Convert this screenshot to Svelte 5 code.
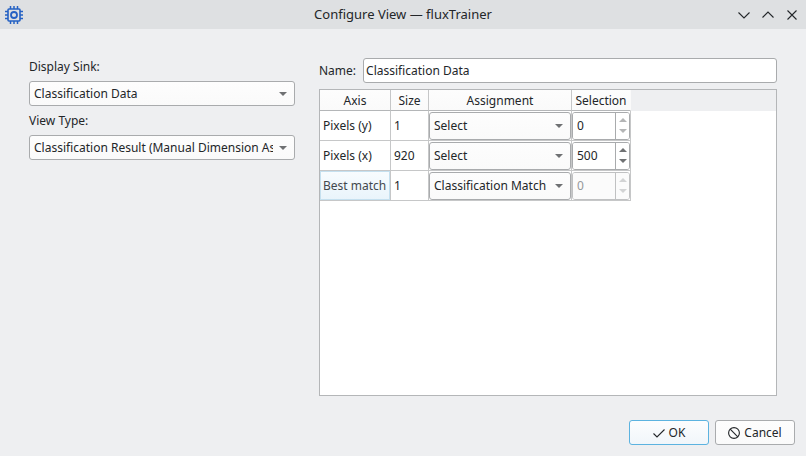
<script lang="ts">
    interface Row {
        axis: string;
        size: number;
        assignment: string;
        selection: number;
        max: number;
        disabled: boolean;
    }

    const sinks = ["Classification Data"];
    const viewTypes = ["Classification Result (Manual Dimension Assignment)"];
    const assignments = ["Select", "Classification Match"];

    let sink = $state(sinks[0]);
    let viewType = $state(viewTypes[0]);
    let name = $state("Classification Data");
    let current = $state(2);
    let rows: Row[] = $state([
        { axis: "Pixels (y)", size: 1, assignment: "Select", selection: 0, max: 0, disabled: false },
        { axis: "Pixels (x)", size: 920, assignment: "Select", selection: 500, max: 919, disabled: false },
        { axis: "Best match", size: 1, assignment: "Classification Match", selection: 0, max: 0, disabled: true },
    ]);

    const step = (row: Row, delta: number) => {
        row.selection = Math.min(Math.max(row.selection + delta, 0), row.max);
    };
</script>

{#snippet combo(id: string, label: string | undefined, options: string[], value: string, onpick: (v: string) => void)}
    <div class="combo">
        <select {id} aria-label={label} {value} onchange={(e) => onpick(e.currentTarget.value)}>
            {#each options as option}
                <option>{option}</option>
            {/each}
        </select>
        <svg class="arrow" viewBox="0 0 8 4" aria-hidden="true"><path d="M0 0h8L4 4z" /></svg>
    </div>
{/snippet}

<div class="window">
    <header class="titlebar">
        <svg class="app-icon" viewBox="0 0 20 20" aria-hidden="true">
            <path d="M6.5 1v3M10 1v3M13.5 1v3M6.5 16v3M10 16v3M13.5 16v3M1 6.5h3M1 10h3M1 13.5h3M16 6.5h3M16 10h3M16 13.5h3" stroke-width="1.5" />
            <rect x="4" y="4" width="12" height="12" rx="1" stroke-width="1.6" />
            <circle cx="10" cy="10" r="3" stroke-width="1.8" />
        </svg>
        <h1>Configure View — fluxTrainer</h1>
        <div class="window-buttons">
            <button type="button" aria-label="Minimize">
                <svg viewBox="0 0 12 12"><path d="M.5 3.5 6 9l5.5-5.5" /></svg>
            </button>
            <button type="button" aria-label="Maximize">
                <svg viewBox="0 0 12 12"><path d="M.5 8.5 6 3l5.5 5.5" /></svg>
            </button>
            <button type="button" aria-label="Close">
                <svg viewBox="0 0 12 12"><path d="m1.5 1.5 9 9M10.5 1.5l-9 9" /></svg>
            </button>
        </div>
    </header>

    <main class="content">
        <section class="source">
            <label for="sink">Display Sink:</label>
            {@render combo("sink", undefined, sinks, sink, (v) => (sink = v))}
            <label for="view-type">View Type:</label>
            {@render combo("view-type", undefined, viewTypes, viewType, (v) => (viewType = v))}
        </section>

        <section class="view">
            <div class="name-row">
                <label for="name">Name:</label>
                <input id="name" type="text" bind:value={name} />
            </div>

            <div class="table-frame">
                <div class="header-fill"></div>
                <table>
                    <colgroup>
                        <col class="col-axis" />
                        <col class="col-size" />
                        <col class="col-assignment" />
                        <col class="col-selection" />
                    </colgroup>
                    <thead>
                        <tr>
                            <th>Axis</th>
                            <th>Size</th>
                            <th>Assignment</th>
                            <th>Selection</th>
                        </tr>
                    </thead>
                    <tbody>
                        {#each rows as row, i}
                            <tr onclick={() => (current = i)}>
                                <td class="text" class:current={current === i}>{row.axis}</td>
                                <td class="text">{row.size}</td>
                                <td>
                                    {@render combo(`assignment-${i}`, `Assignment of ${row.axis}`, assignments, row.assignment, (v) => (row.assignment = v))}
                                </td>
                                <td>
                                    <div class="spin" class:disabled={row.disabled}>
                                        <input
                                            type="number"
                                            aria-label={`Selection of ${row.axis}`}
                                            min="0"
                                            max={row.max}
                                            disabled={row.disabled}
                                            bind:value={row.selection}
                                        />
                                        <div class="steps">
                                            <button
                                                type="button"
                                                aria-label="Increase"
                                                disabled={row.disabled || row.max === 0}
                                                onclick={() => step(row, 1)}
                                            >
                                                <svg viewBox="0 0 8 4"><path d="M0 4h8L4 0z" /></svg>
                                            </button>
                                            <button
                                                type="button"
                                                aria-label="Decrease"
                                                disabled={row.disabled || row.selection <= 0}
                                                onclick={() => step(row, -1)}
                                            >
                                                <svg viewBox="0 0 8 4"><path d="M0 0h8L4 4z" /></svg>
                                            </button>
                                        </div>
                                    </div>
                                </td>
                            </tr>
                        {/each}
                    </tbody>
                </table>
            </div>
        </section>
    </main>

    <footer class="actions">
        <button type="button" class="push default">
            <svg viewBox="0 0 12 12" aria-hidden="true"><path d="M.5 6.5 4 10l7.500-7.500" /></svg>
            OK
        </button>
        <button type="button" class="push">
            <svg viewBox="0 0 12 12" aria-hidden="true">
                <circle cx="6" cy="6" r="5.4" />
                <path d="m2.2 2.2 7.600 7.600" />
            </svg>
            Cancel
        </button>
    </footer>
</div>

<style>
    :global(body) {
        background: #eeeff1;
    }

    .window {
        display: flex;
        flex-direction: column;
        box-sizing: border-box;
        min-height: 100vh;
        background: #eeeff1;
        color: #232629;
        font-family: "Noto Sans", sans-serif;
        font-size: 12px;
        line-height: 17px;
    }

    .window :is(input, select, button) {
        box-sizing: border-box;
        margin: 0;
        color: inherit;
        font: inherit;
    }

    .titlebar {
        display: grid;
        grid-template-columns: 1fr auto 1fr;
        align-items: center;
        height: 29px;
        padding: 0 4px;
        background: #dee0e2;
    }

    .titlebar h1 {
        margin: 0;
        font-size: 13px;
        font-weight: 400;
    }

    .app-icon {
        width: 20px;
        height: 20px;
        fill: none;
        stroke: #2561c4;
    }

    .window-buttons {
        display: flex;
        justify-content: flex-end;
        gap: 12px;
        padding-right: 4px;
    }

    .window-buttons button {
        display: flex;
        padding: 0;
        border: 0;
        background: none;
    }

    .window-buttons svg {
        width: 12px;
        height: 12px;
        fill: none;
        stroke: #232629;
        stroke-width: 1.1;
    }

    .content {
        display: grid;
        flex: 1;
        grid-template-columns: 266px minmax(0, 1fr);
        gap: 24px;
        padding: 29px 29px 24px;
    }

    .source,
    .view {
        display: flex;
        flex-direction: column;
        gap: 6px;
    }

    .combo {
        display: grid;
        align-items: center;
        min-width: 0;
    }

    .combo select {
        grid-area: 1 / 1;
        width: 100%;
        height: 25px;
        padding: 0 21px 0 4px;
        border: 1px solid #a9abad;
        border-radius: 3px;
        background: linear-gradient(#fdfdfd, #fafafa);
        appearance: none;
    }

    .arrow {
        grid-area: 1 / 1;
        justify-self: end;
        width: 8px;
        height: 4px;
        margin-right: 8px;
        fill: #6f7173;
        pointer-events: none;
    }

    .name-row {
        display: flex;
        align-items: center;
        gap: 7px;
    }

    .name-row input {
        flex: 1;
        min-width: 0;
        height: 25px;
        padding: 0 2px;
        border: 1px solid #a9abad;
        border-radius: 3px;
        background: #fff;
    }

    .table-frame {
        display: grid;
        flex: 1;
        align-items: start;
        border: 1px solid #b4b6b8;
        background: #fff;
    }

    .header-fill {
        grid-area: 1 / 1;
        height: 21px;
        background: #eeeff1;
    }

    table {
        grid-area: 1 / 1;
        width: 311px;
        border-spacing: 0;
        table-layout: fixed;
    }

    .col-axis {
        width: 71px;
    }

    .col-size {
        width: 38px;
    }

    .col-assignment {
        width: 143px;
    }

    .col-selection {
        width: 59px;
    }

    th,
    td {
        box-sizing: border-box;
        padding: 0;
        border-right: 1px solid #c6c7c8;
        border-bottom: 1px solid #c6c7c8;
    }

    th {
        height: 21px;
        border-bottom-color: #b4b6b8;
        background: linear-gradient(#fdfdfd, #fafafa);
        font-weight: 400;
        text-align: center;
    }

    th:last-child {
        border-right-color: #fafafa;
    }

    td {
        height: 30px;
        background: #fff;
    }

    td.text {
        padding: 0 3px;
        white-space: nowrap;
    }

    td.current {
        background: linear-gradient(#f8fcfe, #e9f4fb);
        box-shadow: inset 0 0 0 1px #c5e0ef;
        color: #43484d;
    }

    td .combo select {
        height: 28px;
    }

    .spin {
        display: flex;
        box-sizing: border-box;
        height: 28px;
        border: 1px solid #a9abad;
        border-radius: 3px;
        overflow: hidden;
    }

    .spin input {
        flex: 1;
        min-width: 0;
        padding: 0 4px;
        border: 0;
        background: #fff;
        appearance: textfield;
    }

    .spin input::-webkit-inner-spin-button {
        appearance: none;
    }

    .steps {
        display: flex;
        flex-direction: column;
        width: 13px;
        padding: 2px 0;
        border-left: 1px solid #a9abad;
        background: #fff;
    }

    .steps button {
        display: flex;
        flex: 1;
        align-items: center;
        justify-content: center;
        padding: 0;
        border: 0;
        background: none;
    }

    .steps svg {
        width: 8px;
        height: 4px;
        fill: #6f7173;
    }

    .steps button:disabled svg {
        fill: #b4b5b6;
    }

    .spin.disabled {
        border-color: #c0c1c2;
    }

    .spin.disabled input,
    .spin.disabled .steps {
        border-color: #c0c1c2;
        background: #fbfbfb;
        color: #96989a;
    }

    .spin.disabled .steps svg {
        fill: #d2d3d4;
    }

    .actions {
        display: flex;
        justify-content: flex-end;
        gap: 6px;
        padding: 0 11px 11px;
    }

    .window .push {
        display: flex;
        align-items: center;
        justify-content: center;
        gap: 4px;
        width: 80px;
        height: 25px;
        padding: 0;
        border: 1px solid #a9abad;
        border-radius: 3px;
        background: linear-gradient(#fdfdfd, #fafafa);
    }

    .window .push.default {
        border-color: #5cb3e0;
        background: linear-gradient(#fcfdfe, #f1f6fa);
    }

    .push svg {
        width: 12px;
        height: 12px;
        fill: none;
        stroke: #232629;
        stroke-width: 1.1;
    }
</style>
